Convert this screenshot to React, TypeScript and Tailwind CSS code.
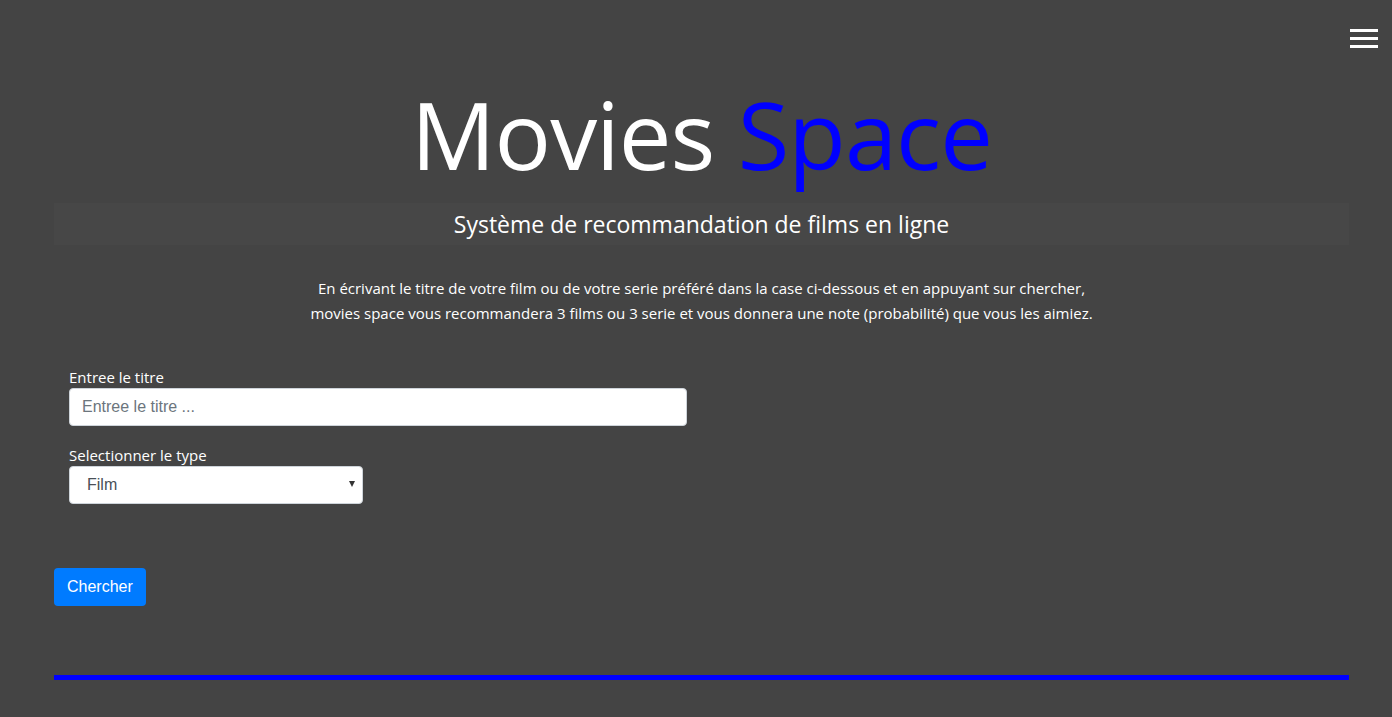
import React from "react";

export default function App() {
  const seg = { fontFamily: '"Open Sans", "Noto Sans", sans-serif' };
  return (
    <div className="min-h-[717px] w-full bg-[#444444] text-white" style={seg}>
      <div className="flex justify-end pt-[29px] pr-[14px]">
        <div className="flex flex-col gap-[5px]">
          <div className="h-[3px] w-[28px] bg-white" />
          <div className="h-[3px] w-[28px] bg-white" />
          <div className="h-[3px] w-[28px] bg-white" />
        </div>
      </div>
      <div className="mx-[54px] mr-[43px]">
        <h1 className="mt-[31px] text-center text-[94px] font-normal leading-[110px] tracking-[-1px]">
          Movies <span className="text-[#0000ff]">Space</span>
        </h1>
        <div className="mt-[14px] flex h-[42px] items-center justify-center bg-[#474747] text-[23px]">
          Système de recommandation de films en ligne
        </div>
        <div className="mt-[31px] text-center text-[15px] leading-[25px]">
          <p>En écrivant le titre de votre film ou de votre serie préféré dans la case ci-dessous et en appuyant sur chercher,</p>
          <p>movies space vous recommandera 3 films ou 3 serie et vous donnera une note (probabilité) que vous les aimiez.</p>
        </div>
        <div className="mt-[40px] px-[15px]">
          <label className="block text-[15px] leading-[22px]">Entree le titre</label>
          <input
            className="h-[38px] w-[618px] rounded-[4px] border border-[#ced4da] bg-white px-[12px] text-[16px] text-[#495057] placeholder:text-[#6c757d]"
            style={{ fontFamily: '"Liberation Sans", Arial, sans-serif' }}
            placeholder="Entree le titre ..."
          />
          <label className="mt-[18px] block text-[15px] leading-[22px]">Selectionner le type</label>
          <div
            className="relative flex h-[38px] w-[294px] items-center rounded-[4px] border border-[#ced4da] bg-white pl-[17px] text-[16px] text-[#495057]"
            style={{ fontFamily: '"Liberation Sans", Arial, sans-serif' }}
          >
            Film
            <span className="absolute right-[7px] top-[14px] h-0 w-0 border-x-[3.5px] border-t-[6px] border-x-transparent border-t-[#333]" />
          </div>
        </div>
        <button
          className="mt-[64px] h-[38px] rounded-[4px] bg-[#007bff] px-[13px] text-[16px] text-white"
          style={{ fontFamily: '"Liberation Sans", Arial, sans-serif' }}
        >
          Chercher
        </button>
        <div className="mt-[69px] h-[5px] bg-[#0000ff]" />
      </div>
    </div>
  );
}
